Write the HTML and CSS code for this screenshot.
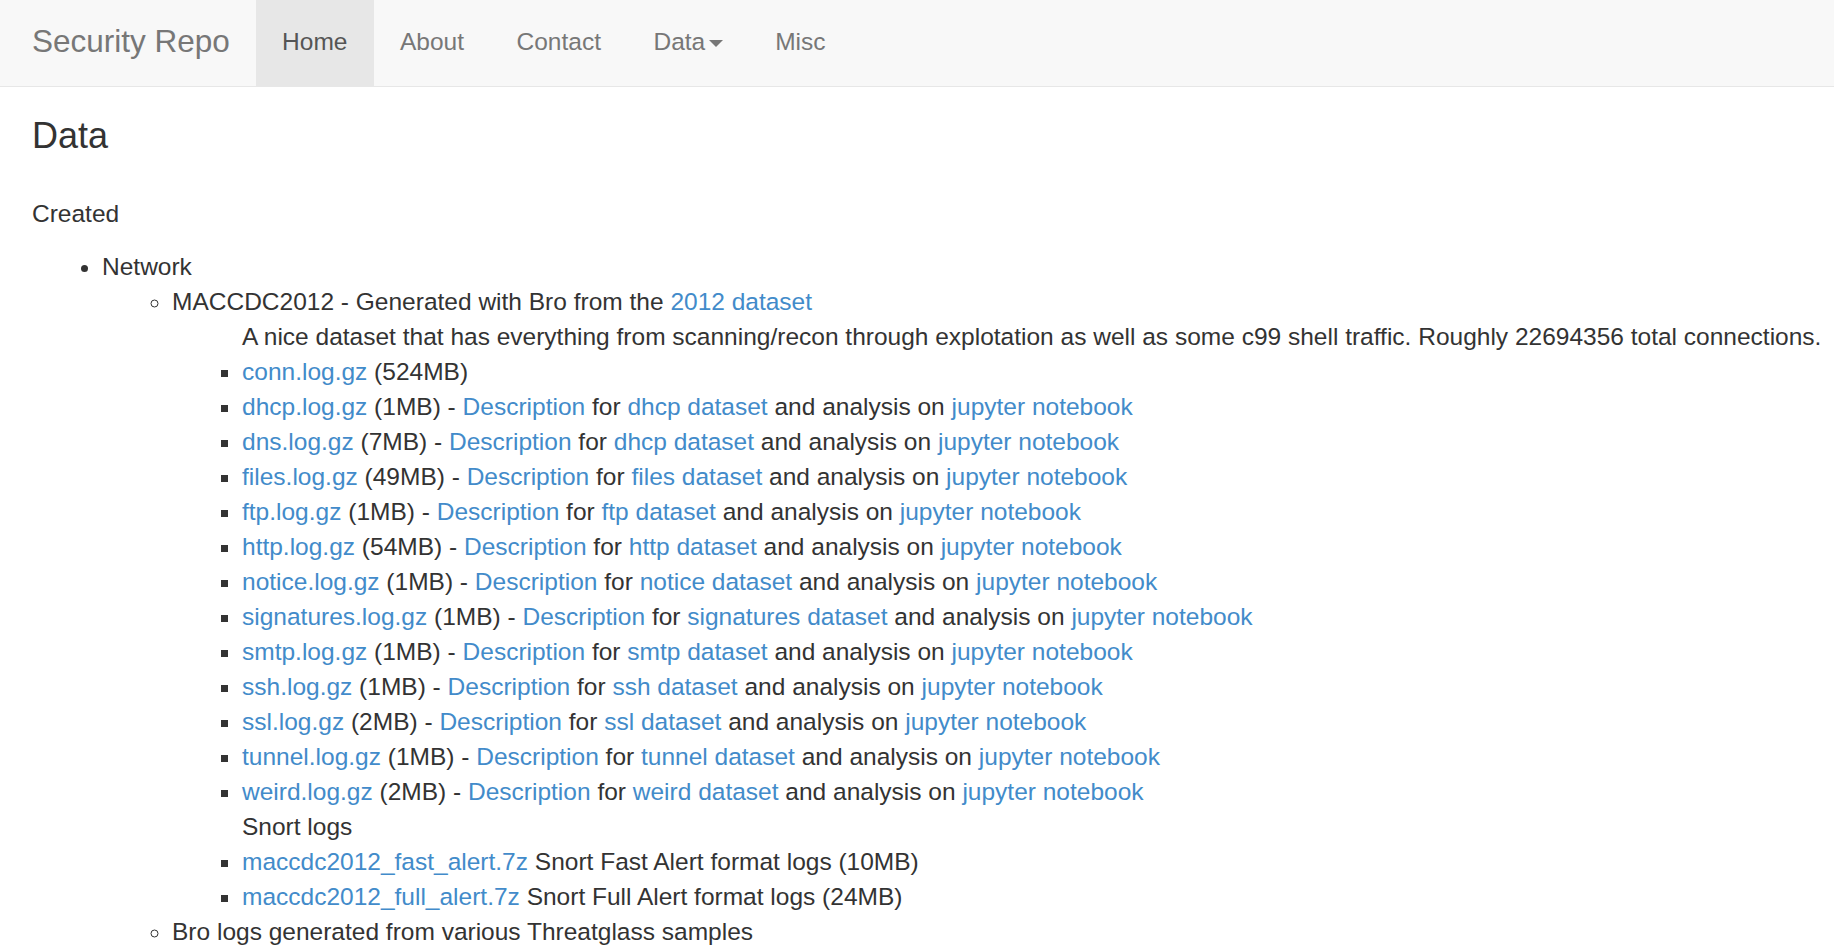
FILE: index.html
```html
<!DOCTYPE html>
<html lang="en">
<head>
    <meta charset="UTF-8">
    <meta name="viewport" content="width=device-width, initial-scale=1.0">
    <title>Security Repo - Data</title>
    <link rel="stylesheet" href="styles.css">
</head>
<body>
    <nav class="navbar">
        <a class="brand" href="#">Security Repo</a>
        <ul class="nav">
            <li class="active"><a href="#">Home</a></li>
            <li><a href="#">About</a></li>
            <li><a href="#">Contact</a></li>
            <li><a href="#">Data<span class="caret"></span></a></li>
            <li><a href="#">Misc</a></li>
        </ul>
    </nav>

    <div class="content">
        <h1>Data</h1>
        <p>Created</p>
        <ul>
            <li>Network
                <ul>
                    <li>MACCDC2012 - Generated with Bro from the <a href="#">2012 dataset</a>
                        <ul>
                            <li class="plain">A nice dataset that has everything from scanning/recon through explotation as well as some c99 shell traffic. Roughly 22694356 total connections.</li>
                            <li><a href="#">conn.log.gz</a> (524MB)</li>
                            <li><a href="#">dhcp.log.gz</a> (1MB) - <a href="#">Description</a> for <a href="#">dhcp dataset</a> and analysis on <a href="#">jupyter notebook</a></li>
                            <li><a href="#">dns.log.gz</a> (7MB) - <a href="#">Description</a> for <a href="#">dhcp dataset</a> and analysis on <a href="#">jupyter notebook</a></li>
                            <li><a href="#">files.log.gz</a> (49MB) - <a href="#">Description</a> for <a href="#">files dataset</a> and analysis on <a href="#">jupyter notebook</a></li>
                            <li><a href="#">ftp.log.gz</a> (1MB) - <a href="#">Description</a> for <a href="#">ftp dataset</a> and analysis on <a href="#">jupyter notebook</a></li>
                            <li><a href="#">http.log.gz</a> (54MB) - <a href="#">Description</a> for <a href="#">http dataset</a> and analysis on <a href="#">jupyter notebook</a></li>
                            <li><a href="#">notice.log.gz</a> (1MB) - <a href="#">Description</a> for <a href="#">notice dataset</a> and analysis on <a href="#">jupyter notebook</a></li>
                            <li><a href="#">signatures.log.gz</a> (1MB) - <a href="#">Description</a> for <a href="#">signatures dataset</a> and analysis on <a href="#">jupyter notebook</a></li>
                            <li><a href="#">smtp.log.gz</a> (1MB) - <a href="#">Description</a> for <a href="#">smtp dataset</a> and analysis on <a href="#">jupyter notebook</a></li>
                            <li><a href="#">ssh.log.gz</a> (1MB) - <a href="#">Description</a> for <a href="#">ssh dataset</a> and analysis on <a href="#">jupyter notebook</a></li>
                            <li><a href="#">ssl.log.gz</a> (2MB) - <a href="#">Description</a> for <a href="#">ssl dataset</a> and analysis on <a href="#">jupyter notebook</a></li>
                            <li><a href="#">tunnel.log.gz</a> (1MB) - <a href="#">Description</a> for <a href="#">tunnel dataset</a> and analysis on <a href="#">jupyter notebook</a></li>
                            <li><a href="#">weird.log.gz</a> (2MB) - <a href="#">Description</a> for <a href="#">weird dataset</a> and analysis on <a href="#">jupyter notebook</a></li>
                            <li class="plain">Snort logs</li>
                            <li><a href="#">maccdc2012_fast_alert.7z</a> Snort Fast Alert format logs (10MB)</li>
                            <li><a href="#">maccdc2012_full_alert.7z</a> Snort Full Alert format logs (24MB)</li>
                        </ul>
                    </li>
                    <li>Bro logs generated from various Threatglass samples</li>
                </ul>
            </li>
        </ul>
    </div>
</body>
</html>
```

FILE: styles.css
```css
body {
    margin: 0;
    font-family: "Liberation Sans", Arial, Helvetica, sans-serif;
    font-size: 24.5px;
    line-height: 35px;
    color: #333;
    background-color: #fff;
}
a {
    color: #428bca;
    text-decoration: none;
}
.navbar {
    display: flex;
    height: 86px;
    padding-left: 6px;
    background-color: #f8f8f8;
    border-bottom: 1px solid #e7e7e7;
}
.brand {
    padding: 24px 26px 0;
    font-size: 31.5px;
    line-height: 35px;
    color: #777;
}
.nav {
    display: flex;
    margin: 0;
    padding: 0;
    list-style: none;
}
.nav a {
    display: block;
    padding: 24px 26.25px 27px;
    color: #777;
}
.nav .active a {
    color: #555;
    background-color: #e7e7e7;
}
.caret {
    display: inline-block;
    width: 0;
    height: 0;
    margin-left: 3.5px;
    vertical-align: middle;
    border-top: 7px solid #777;
    border-left: 7px solid transparent;
    border-right: 7px solid transparent;
}
.content {
    padding-left: 32px;
}
h1 {
    margin: 29px 0 40px;
    font-size: 36px;
    font-weight: 500;
    line-height: 39.6px;
}
p {
    margin: 0 0 18.5px;
}
.content ul {
    margin: 0;
    padding-left: 70px;
}
.content li.plain {
    list-style: none;
}
```
